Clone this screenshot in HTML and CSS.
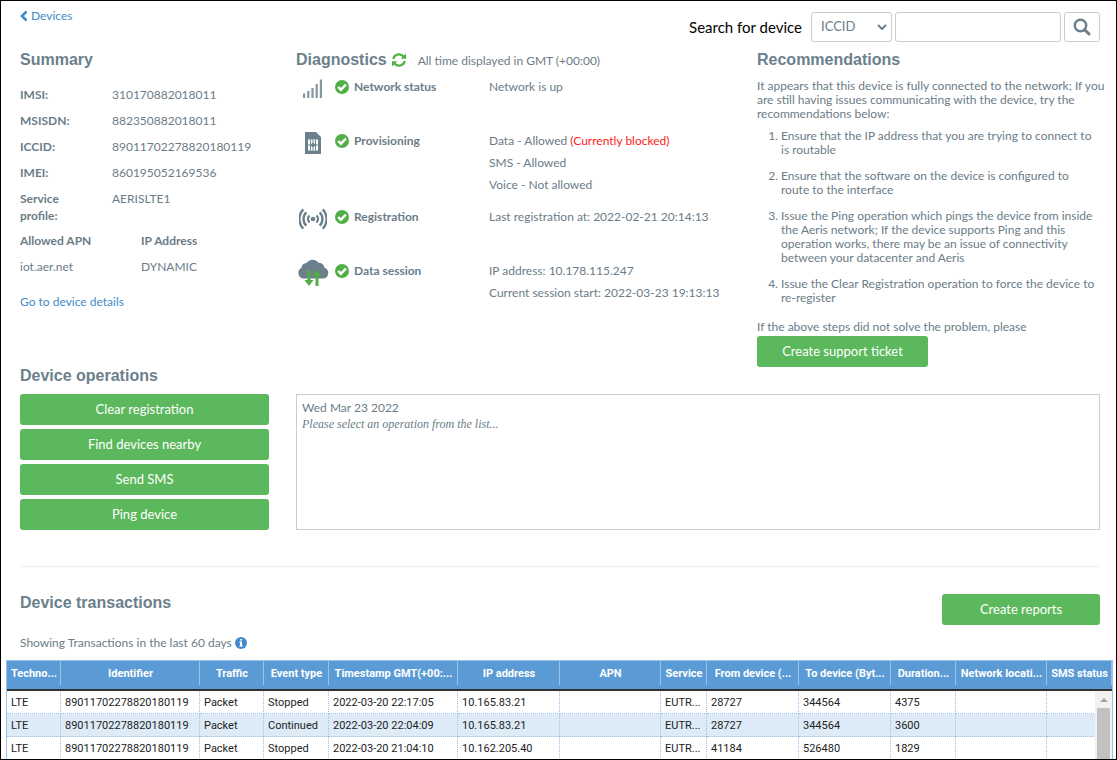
FILE: index.html
```html
<!DOCTYPE html>
<html lang="en">

<head>
    <meta charset="UTF-8">
    <meta name="viewport" content="width=device-width, initial-scale=1.0">
    <title>Device diagnostics</title>
    <link rel="stylesheet" href="styles.css">
</head>

<body>
    <!-- shared icon -->
    <svg class="sprite" width="0" height="0" aria-hidden="true">
        <symbol id="check" viewBox="0 0 14 14">
            <circle cx="7" cy="7" r="7" fill="#52ae46" />
            <path d="M3.200 7l2.700 2.700 5-5" fill="none" stroke="#fff" stroke-width="2.400" />
        </symbol>
    </svg>

    <div class="page">
        <header class="topbar">
            <a href="#" class="back">
                <svg width="8" height="12" viewBox="0 0 8 12"><path d="M6.500 1.500L2 6l4.500 4.500" fill="none" stroke="#428bca" stroke-width="2.600" /></svg>
                Devices
            </a>
            <form class="search">
                <label for="searchType">Search for device</label>
                <select id="searchType">
                    <option>ICCID</option>
                    <option>IMSI</option>
                    <option>MSISDN</option>
                </select>
                <input type="text" aria-label="Device identifier">
                <button type="button" aria-label="Search">
                    <svg width="18" height="18" viewBox="0 0 18 18" fill="none" stroke="#6b808c">
                        <circle cx="7.500" cy="7.500" r="5.700" stroke-width="2.400" />
                        <path d="M11.600 11.600l4.400 4.400" stroke-width="3" stroke-linecap="round" />
                    </svg>
                </button>
            </form>
        </header>

        <div class="overview">
            <section class="summary">
                <h2>Summary</h2>
                <dl>
                    <dt>IMSI:</dt>
                    <dd>310170882018011</dd>
                    <dt>MSISDN:</dt>
                    <dd>882350882018011</dd>
                    <dt>ICCID:</dt>
                    <dd>89011702278820180119</dd>
                    <dt>IMEI:</dt>
                    <dd>860195052169536</dd>
                    <dt>Service profile:</dt>
                    <dd>AERISLTE1</dd>
                </dl>
                <table class="apn">
                    <tr>
                        <th>Allowed APN</th>
                        <th>IP Address</th>
                    </tr>
                    <tr>
                        <td>iot.aer.net</td>
                        <td>DYNAMIC</td>
                    </tr>
                </table>
                <a href="#">Go to device details</a>
            </section>

            <section class="diagnostics">
                <div class="diag-title">
                    <h2>Diagnostics</h2>
                    <svg width="14" height="14" viewBox="0 0 14 14">
                        <g fill="none" stroke="#52ae46" stroke-width="2.200">
                            <path d="M1.300 6A5.800 5.800 0 0 1 11.500 3.500" />
                            <path d="M12.700 8A5.800 5.800 0 0 1 2.500 10.500" />
                        </g>
                        <path d="M14 .5v5.300H8.700zM0 13.500V8.200h5.300z" fill="#52ae46" />
                    </svg>
                    <span>All time displayed in GMT (+00:00)</span>
                </div>

                <div class="diag-row">
                    <div class="diag-icon">
                        <svg width="20" height="20" viewBox="0 1 20 20" fill="#8497a0">
                            <path d="M0 15.500h2.200V20H0zM4.200 13h2.200v7H4.200zM8.400 10h2.200v10H8.400zM12.600 6h2.200v14h-2.200zM16.800 1.500H19V20h-2.200z" />
                        </svg>
                    </div>
                    <h3><svg width="14" height="14"><use href="#check" /></svg>Network status</h3>
                    <div class="diag-info">
                        <p>Network is up</p>
                    </div>
                </div>

                <div class="diag-row">
                    <div class="diag-icon">
                        <svg width="18" height="24" viewBox="0 0 18 24">
                            <path d="M1 1h11l5 5v17H1z" fill="#6b808c" />
                            <rect x="4" y="8.500" width="10" height="11" fill="#fff" />
                            <path d="M6.500 8.500v11M9 8.500v11M11.500 8.500v11M4 14h10" stroke="#6b808c" stroke-width="1" />
                            <circle cx="9" cy="14" r="2" fill="#6b808c" />
                        </svg>
                    </div>
                    <h3><svg width="14" height="14"><use href="#check" /></svg>Provisioning</h3>
                    <div class="diag-info">
                        <p>Data - Allowed <span class="blocked">(Currently blocked)</span></p>
                        <p>SMS - Allowed</p>
                        <p>Voice - Not allowed</p>
                    </div>
                </div>

                <div class="diag-row">
                    <div class="diag-icon">
                        <svg width="28" height="22" viewBox="0 0 28 22" fill="none" stroke="#6b808c" stroke-width="2.400">
                            <circle cx="14" cy="11" r="2.300" fill="#6b808c" stroke="none" />
                            <path d="M10.500 7.500a5 5 0 0 0 0 7M17.500 7.500a5 5 0 0 1 0 7" />
                            <path d="M7.300 4.300a9.500 9.500 0 0 0 0 13.400M20.700 4.300a9.500 9.500 0 0 1 0 13.400" />
                            <path d="M4.300 1.300a14 14 0 0 0 0 19.400M23.700 1.300a14 14 0 0 1 0 19.400" />
                        </svg>
                    </div>
                    <h3><svg width="14" height="14"><use href="#check" /></svg>Registration</h3>
                    <div class="diag-info">
                        <p>Last registration at: 2022-02-21 20:14:13</p>
                    </div>
                </div>

                <div class="diag-row">
                    <div class="diag-icon">
                        <svg width="32" height="28" viewBox="0 0 32 28">
                            <path d="M6 19.500A5.800 5.800 0 0 1 4.500 8.700 5.500 5.500 0 0 1 9.500 4a7.500 7.500 0 0 1 12-.3A5.800 5.800 0 0 1 27.500 8.700 5.600 5.600 0 0 1 26.500 19.500z" fill="#6b808c" />
                            <path d="M10.500 11h3v10h3L12 27l-4.500-6h3zM18.500 27h3V17h3L20 11l-4.500 6h3z" fill="#52ae46" />
                        </svg>
                    </div>
                    <h3><svg width="14" height="14"><use href="#check" /></svg>Data session</h3>
                    <div class="diag-info">
                        <p>IP address: 10.178.115.247</p>
                        <p>Current session start: 2022-03-23 19:13:13</p>
                    </div>
                </div>
            </section>

            <section class="recommendations">
                <h2>Recommendations</h2>
                <p>It appears that this device is fully connected to the network; If you are still having issues communicating with the device, try the recommendations below:</p>
                <ol>
                    <li>Ensure that the IP address that you are trying to connect to is routable</li>
                    <li>Ensure that the software on the device is configured to route to the interface</li>
                    <li>Issue the Ping operation which pings the device from inside the Aeris network; If the device supports Ping and this operation works, there may be an issue of connectivity between your datacenter and Aeris</li>
                    <li>Issue the Clear Registration operation to force the device to re-register</li>
                </ol>
                <p>If the above steps did not solve the problem, please</p>
                <button type="button" class="btn btn-ticket">Create support ticket</button>
            </section>
        </div>

        <section class="operations">
            <h2>Device operations</h2>
            <div class="operations-grid">
                <div class="operations-list">
                    <button type="button" class="btn">Clear registration</button>
                    <button type="button" class="btn">Find devices nearby</button>
                    <button type="button" class="btn">Send SMS</button>
                    <button type="button" class="btn">Ping device</button>
                </div>
                <div class="console">
                    <p>Wed Mar 23 2022</p>
                    <p class="hint">Please select an operation from the list...</p>
                </div>
            </div>
        </section>

        <section class="transactions">
            <div class="transactions-head">
                <h2>Device transactions</h2>
                <button type="button" class="btn btn-reports">Create reports</button>
            </div>
            <p class="showing">Showing Transactions in the last 60 days
                <svg width="12" height="12" viewBox="0 0 12 12">
                    <circle cx="6" cy="6" r="6" fill="#428bca" />
                    <path d="M5 2h2v1.600H5zM4.300 4.600H7v3.800h.8v1.200H4.300V8.400H5V5.800h-.7z" fill="#fff" />
                </svg>
            </p>
        </section>

        <div class="grid">
            <table>
                <colgroup>
                    <col class="c-tech"><col class="c-id"><col class="c-traffic"><col class="c-event"><col class="c-time"><col class="c-ip"><col class="c-apn"><col class="c-service"><col class="c-bytes"><col class="c-bytes"><col class="c-duration"><col class="c-network"><col class="c-sms">
                </colgroup>
                <thead>
                    <tr>
                        <th>Techno...</th>
                        <th>Identifier</th>
                        <th>Traffic</th>
                        <th>Event type</th>
                        <th>Timestamp GMT(+00:...</th>
                        <th>IP address</th>
                        <th>APN</th>
                        <th>Service</th>
                        <th>From device (...</th>
                        <th>To device (Byt...</th>
                        <th>Duration...</th>
                        <th>Network locati...</th>
                        <th>SMS status</th>
                    </tr>
                </thead>
                <tbody>
                    <tr>
                        <td>LTE</td>
                        <td>89011702278820180119</td>
                        <td>Packet</td>
                        <td>Stopped</td>
                        <td>2022-03-20 22:17:05</td>
                        <td>10.165.83.21</td>
                        <td></td>
                        <td>EUTR...</td>
                        <td>28727</td>
                        <td>344564</td>
                        <td>4375</td>
                        <td></td>
                        <td></td>
                    </tr>
                    <tr>
                        <td>LTE</td>
                        <td>89011702278820180119</td>
                        <td>Packet</td>
                        <td>Continued</td>
                        <td>2022-03-20 22:04:09</td>
                        <td>10.165.83.21</td>
                        <td></td>
                        <td>EUTR...</td>
                        <td>28727</td>
                        <td>344564</td>
                        <td>3600</td>
                        <td></td>
                        <td></td>
                    </tr>
                    <tr>
                        <td>LTE</td>
                        <td>89011702278820180119</td>
                        <td>Packet</td>
                        <td>Stopped</td>
                        <td>2022-03-20 21:04:10</td>
                        <td>10.162.205.40</td>
                        <td></td>
                        <td>EUTR...</td>
                        <td>41184</td>
                        <td>526480</td>
                        <td>1829</td>
                        <td></td>
                        <td></td>
                    </tr>
                </tbody>
            </table>
            <div class="scrollbar">
                <div class="scroll-up"></div>
                <div class="scroll-thumb"></div>
            </div>
        </div>
    </div>
</body>

</html>
```

FILE: styles.css
```css
* {
    box-sizing: border-box;
}

body {
    font-family: Lato, sans-serif;
    font-size: 12px;
    line-height: 17px;
    color: #6b7c88;
    background: #fff;
    margin: 0;
}

.page {
    height: 100vh;
    border: 1px solid #000;
    overflow: hidden;
}

.sprite {
    position: absolute;
}

h2 {
    font-family: "Liberation Sans", Arial, sans-serif;
    font-size: 16px;
    line-height: 20px;
    color: #6b808c;
    margin: 0;
}

h3,
p,
dl,
dd {
    margin: 0;
}

a {
    color: #428bca;
    text-decoration: none;
}

/* top bar */
.topbar {
    display: flex;
    justify-content: space-between;
    align-items: flex-start;
    padding: 6px 16px 0 19px;
}

.back {
    display: flex;
    align-items: center;
    gap: 3px;
}

.search {
    display: flex;
    align-items: center;
    gap: 3px;
    padding-top: 5px;
}

.search label {
    font-size: 15px;
    color: #000;
    margin-right: 6px;
}

.search select,
.search input,
.search button {
    height: 30px;
    border: 1px solid #ccc;
    border-radius: 3px;
    background-color: #fff;
    color: #6b7c88;
}

.search select {
    width: 81px;
    padding: 0 9px 2px;
    font: 13px Lato, sans-serif;
    appearance: none;
    background-image: url("data:image/svg+xml,%3Csvg xmlns='http://www.w3.org/2000/svg' width='10' height='6'%3E%3Cpath d='M1 1l4 4 4-4' fill='none' stroke='%236b808c' stroke-width='2'/%3E%3C/svg%3E");
    background-repeat: no-repeat;
    background-position: right 4px center;
}

.search input {
    width: 166px;
}

.search button {
    width: 36px;
    padding: 0;
    display: flex;
    align-items: center;
    justify-content: center;
}

/* overview columns */
.overview {
    display: grid;
    grid-template-columns: 276fr 461fr 343fr;
    padding: 8px 16px 0 19px;
}

.summary dl {
    display: grid;
    grid-template-columns: 62px 1fr;
    gap: 9px 30px;
    padding-top: 16px;
}

.summary dt {
    font-weight: bold;
}

.apn {
    border-collapse: collapse;
    margin: 3px 0 14px;
}

.apn th,
.apn td {
    width: 121px;
    height: 26px;
    padding: 0;
    text-align: left;
}

.diag-title {
    display: flex;
    align-items: center;
    gap: 5px;
    margin-bottom: 6px;
}

.diag-title span {
    margin-left: 7px;
}

.diag-row {
    display: grid;
    grid-template-columns: 34px 159px 1fr;
    align-items: start;
    min-height: 54px;
    padding-bottom: 10px;
    line-height: 22px;
}

.diag-icon {
    display: flex;
    align-items: center;
    justify-content: center;
    height: 26px;
}

.diag-row h3 {
    display: flex;
    align-items: center;
    gap: 5px;
    padding-left: 5px;
    font-size: 12px;
}

.blocked {
    color: #f22;
}

.recommendations {
    line-height: 14px;
}

.recommendations h2 {
    margin-bottom: 9px;
}

.recommendations p {
    margin-right: -8px;
}

.recommendations ol {
    margin: 8px 0 15px;
    padding: 0 2px 0 24px;
}

.recommendations li + li {
    margin-top: 12px;
}

.btn {
    height: 31px;
    border: none;
    border-radius: 3px;
    padding: 0 6px 2px;
    background: #5cb85c;
    color: #fff;
    font: 13px Lato, sans-serif;
    cursor: pointer;
}

.btn:hover {
    background: #4cae4c;
}

.btn-ticket {
    width: 171px;
    margin-top: 2px;
}

/* operations */
.operations {
    margin: -1px 16px 0 19px;
    padding-bottom: 36px;
    border-bottom: 1px solid #eee;
}

.operations-grid {
    display: grid;
    grid-template-columns: 276fr 804fr;
    margin-top: 8px;
}

.operations-list {
    display: flex;
    flex-direction: column;
    gap: 4px;
    padding-right: 27px;
}

.console {
    border: 1px solid #ccc;
    padding: 4px 5px;
}

.hint {
    font-family: "Liberation Serif", serif;
    font-style: italic;
}

/* transactions */
.transactions {
    padding: 26px 16px 0 19px;
}

.transactions-head {
    display: flex;
    justify-content: space-between;
    align-items: flex-start;
}

.btn-reports {
    width: 158px;
    margin-top: 1px;
}

.showing {
    display: flex;
    align-items: center;
    gap: 3px;
    padding: 9px 0;
}

.grid {
    position: relative;
    margin: 0 3px 0 5px;
    border: 1px solid #9bc2e6;
    border-bottom: none;
    color: #222;
    font-family: Roboto, sans-serif;
    font-size: 11px;
}

.grid table {
    width: 100%;
    table-layout: fixed;
    border-collapse: separate;
    border-spacing: 0;
}

.grid th,
.grid td {
    padding: 0 2px 0 4px;
    overflow: hidden;
    text-overflow: ellipsis;
    white-space: nowrap;
}

.grid th {
    height: 30px;
    padding: 0 2px 3px;
    border-bottom: 2px solid #333;
    background: #5b9bd5 linear-gradient(#9bc2e6, #9bc2e6) right top / 1px 24px no-repeat;
    color: #fff;
    line-height: 24px;
}

.grid td {
    height: 23px;
    border-right: 1px dotted #9bc2e6;
    border-bottom: 1px dotted #9bc2e6;
}

.grid tbody tr:nth-child(even) {
    background: #ddebf7;
}

.c-tech { width: 54px; }
.c-id { width: 139px; }
.c-traffic { width: 64px; }
.c-event { width: 65px; }
.c-time { width: 129px; }
.c-ip { width: 102px; }
.c-apn { width: auto; }
.c-service { width: 46px; }
.c-bytes { width: 92px; }
.c-duration { width: 65px; }
.c-network { width: 91px; }
.c-sms { width: 65px; }

.scrollbar {
    position: absolute;
    top: 30px;
    right: 0;
    bottom: 0;
    width: 17px;
    background: #f1f1f1;
    padding: 0 2px;
    display: flex;
    flex-direction: column;
}

.scroll-up {
    height: 17px;
    display: flex;
    align-items: center;
    justify-content: center;
}

.scroll-up::before {
    content: "";
    border: 4px solid transparent;
    border-top: none;
    border-bottom-color: #a3a3a3;
}

.scroll-thumb {
    flex: 1;
    background: #c1c1c1;
}
```
